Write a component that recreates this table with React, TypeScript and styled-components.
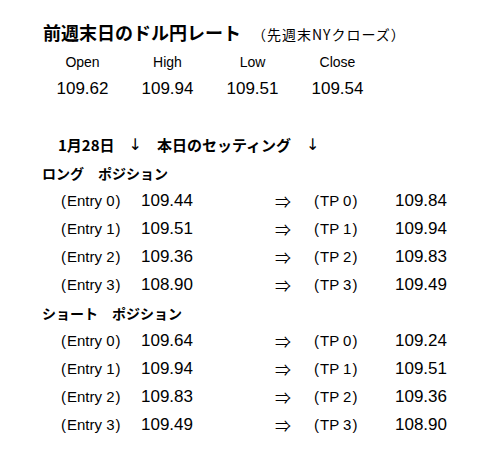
import styled, { createGlobalStyle } from 'styled-components';

const GlobalStyle = createGlobalStyle`
  html, body {
    margin: 0;
    padding: 0;
    background: #ffffff;
  }
  body {
    font-family: "Liberation Sans", "Noto Sans CJK JP", sans-serif;
    color: #000000;
  }
`;

const jp = `"Noto Sans CJK JP", "Liberation Sans", sans-serif`;

const Page = styled.div`
  width: 500px;
  height: 450px;
  padding-top: 20px;
  box-sizing: border-box;
  overflow: hidden;
`;

const TitleRow = styled.div`
  display: flex;
  align-items: baseline;
  height: 24px;
  line-height: 24px;
  padding-left: 43px;
`;

const Title = styled.span`
  font-family: ${jp};
  font-size: 18px;
  font-weight: 700;
`;

const Note = styled.span`
  font-family: ${jp};
  font-size: 14px;
  letter-spacing: 1px;
  margin-left: 11px;
`;

const RateGrid = styled.div`
  display: grid;
  grid-template-columns: repeat(4, 85px);
  margin-left: 40px;
  margin-top: 5px;
`;

const RateHead = styled.div`
  text-align: center;
  font-size: 14px;
  height: 26px;
  line-height: 26px;
`;

const RateValue = styled.div`
  text-align: center;
  font-size: 17px;
  height: 28px;
  line-height: 28px;
`;

const Settings = styled.div`
  margin-top: 28px;
  line-height: 28px;
`;

const DateHeading = styled.div`
  display: flex;
  align-items: center;
  height: 28px;
  padding-left: 58px;
  font-family: ${jp};
  font-size: 15px;
  font-weight: 700;
`;

const Arrow = styled.span<{ $gap: number }>`
  margin-left: ${(p) => p.$gap}px;
  font-family: "DejaVu Sans", sans-serif;
  font-weight: 400;
  font-size: 16px;
`;

const HeadingPart = styled.span<{ $gap: number }>`
  margin-left: ${(p) => p.$gap}px;
`;

const PositionHeading = styled.div`
  height: 28px;
  padding-left: 42px;
  font-family: ${jp};
  font-size: 14px;
  font-weight: 700;
`;

const TradeRow = styled.div`
  display: grid;
  grid-template-columns: 80px 135px 38px 81px auto;
  align-items: center;
  height: 28px;
  padding-left: 61px;
`;

const Label = styled.span`
  font-size: 15px;
  white-space: nowrap;
`;

const Paren = styled.span<{ $side: 'l' | 'r' }>`
  margin-${(p) => (p.$side === 'l' ? 'right' : 'left')}: 1px;
`;

const Price = styled.span`
  font-size: 17px;
`;

const Implies = styled.span`
  font-family: "Noto Sans CJK JP", sans-serif;
  font-size: 16px;
  margin-left: -1px;
`;

const rates = [
  { name: 'Open', value: '109.62' },
  { name: 'High', value: '109.94' },
  { name: 'Low', value: '109.51' },
  { name: 'Close', value: '109.54' },
];

const longRows = [
  ['109.44', '109.84'],
  ['109.51', '109.94'],
  ['109.36', '109.83'],
  ['108.90', '109.49'],
];

const shortRows = [
  ['109.64', '109.24'],
  ['109.94', '109.51'],
  ['109.83', '109.36'],
  ['109.49', '108.90'],
];

const Bracketed = ({ text }: { text: string }) => (
  <Label>
    <Paren $side="l">(</Paren>
    {text}
    <Paren $side="r">)</Paren>
  </Label>
);

const Trades = ({ rows }: { rows: string[][] }) => (
  <>
    {rows.map(([entry, tp], i) => (
      <TradeRow key={i}>
        <Bracketed text={`Entry ${i}`} />
        <Price>{entry}</Price>
        <Implies>⇒</Implies>
        <Bracketed text={`TP ${i}`} />
        <Price>{tp}</Price>
      </TradeRow>
    ))}
  </>
);

export default function App() {
  return (
    <Page>
      <GlobalStyle />
      <TitleRow>
        <Title>前週末日のドル円レート</Title>
        <Note>（先週末NYクローズ）</Note>
      </TitleRow>
      <RateGrid>
        {rates.map((r) => (
          <RateHead key={r.name}>{r.name}</RateHead>
        ))}
        {rates.map((r) => (
          <RateValue key={r.name}>{r.value}</RateValue>
        ))}
      </RateGrid>
      <Settings>
        <DateHeading>
          <span>1月28日</span>
          <Arrow $gap={14}>↓</Arrow>
          <HeadingPart $gap={15}>本日のセッティング</HeadingPart>
          <Arrow $gap={15}>↓</Arrow>
        </DateHeading>
        <PositionHeading>ロング　ポジション</PositionHeading>
        <Trades rows={longRows} />
        <PositionHeading>ショート　ポジション</PositionHeading>
        <Trades rows={shortRows} />
      </Settings>
    </Page>
  );
}
